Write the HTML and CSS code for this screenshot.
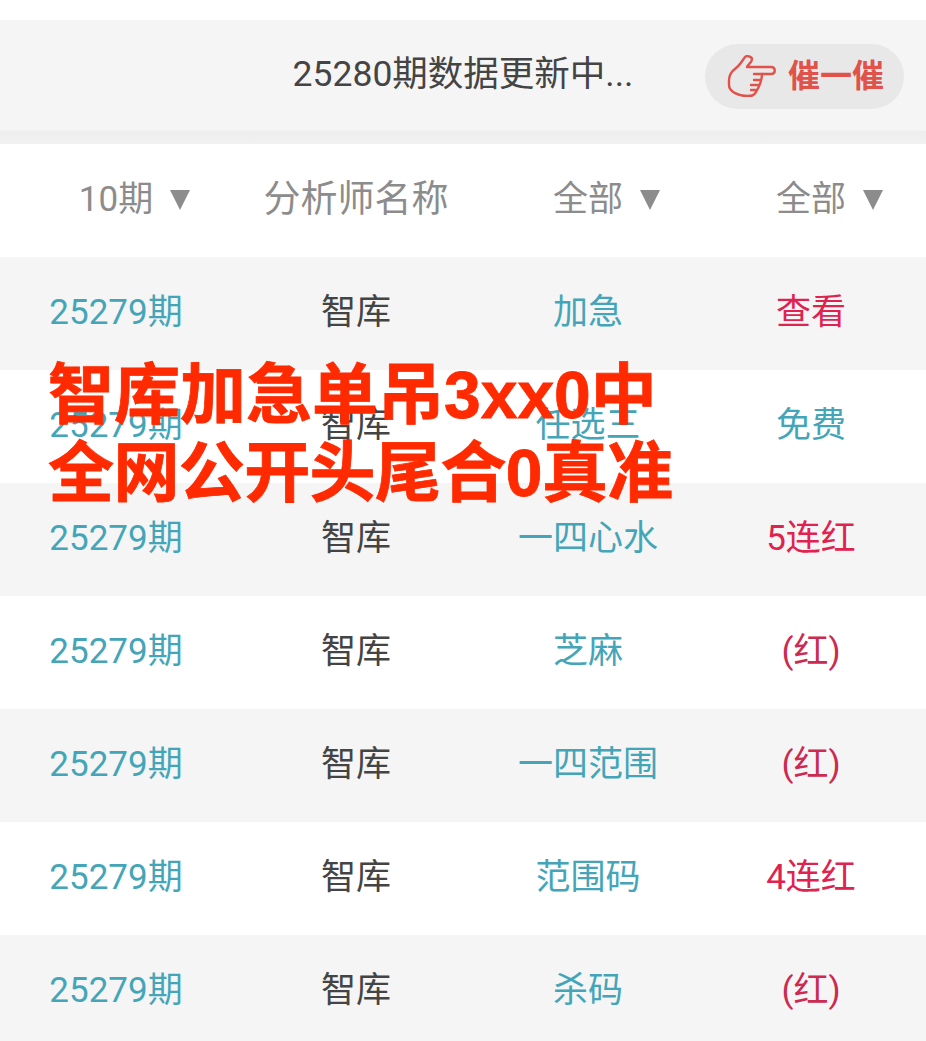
FILE: index.html
```html
<!DOCTYPE html>
<html lang="zh-CN">
<head>
    <meta charset="UTF-8">
    <meta name="viewport" content="width=device-width, initial-scale=1.0">
    <title>智库</title>
    <link rel="stylesheet" href="styles.css">
</head>
<body>
    <div class="page">
        <div class="notice">
            <p class="notice-text">25280期数据更新中...</p>
            <button type="button" class="urge">
                <svg class="urge-icon" viewBox="0 0 50 42" fill="none" stroke="#e0524a" stroke-width="2.4" stroke-linecap="round" stroke-linejoin="round">
                    <path d="M2 25C2 19 5 16 9 13C13 10 15 6 18 2C20 0 25 2 25 4C25 8 21 9 20 12H44C49 12 49 19 44 19H35C35 25 32 32 29 37C27 41 24 41 20 41C12 41 2 37 2 30Z"/>
                    <path d="M35 19H27M33 25H27M31 30H24M29 35H24"/>
                </svg>
                <span>催一催</span>
            </button>
        </div>

        <div class="table-head">
            <div class="head-cell">10期<i class="arrow"></i></div>
            <div class="head-cell name-cell">分析师名称</div>
            <div class="head-cell">全部<i class="arrow"></i></div>
            <div class="head-cell">全部<i class="arrow"></i></div>
        </div>

        <div class="row">
            <div class="issue">25279期</div><div class="name">智库</div><div class="kind">加急</div><div class="crimson">查看</div>
        </div>
        <div class="row">
            <div class="issue">25279期</div><div class="name">智库</div><div class="kind">任选三</div><div class="kind">免费</div>
        </div>
        <div class="row">
            <div class="issue">25279期</div><div class="name">智库</div><div class="kind">一四心水</div><div class="crimson">5连红</div>
        </div>
        <div class="row">
            <div class="issue">25279期</div><div class="name">智库</div><div class="kind">芝麻</div><div class="wine">(红)</div>
        </div>
        <div class="row">
            <div class="issue">25279期</div><div class="name">智库</div><div class="kind">一四范围</div><div class="wine">(红)</div>
        </div>
        <div class="row">
            <div class="issue">25279期</div><div class="name">智库</div><div class="kind">范围码</div><div class="crimson">4连红</div>
        </div>
        <div class="row">
            <div class="issue">25279期</div><div class="name">智库</div><div class="kind">杀码</div><div class="wine">(红)</div>
        </div>

        <div class="banner">
            <div>智库加急单吊3xx0中</div>
            <div class="banner-tight">全网公开头尾合0真准</div>
        </div>
    </div>
</body>
</html>
```

FILE: styles.css
```css
html, body {
    margin: 0;
    height: 100%;
    overflow: hidden;
}

body {
    font-family: Roboto, "Noto Sans CJK SC", sans-serif;
    background-color: #ffffff;
}

.page {
    position: relative;
    height: 1041px;
    overflow: hidden;
    padding-top: 20px;
    box-sizing: border-box;
}

/* Top notice bar */
.notice {
    display: grid;
    grid-template-columns: 1fr auto 1fr;
    align-items: center;
    height: 124px;
    padding: 0 22px 14px 0;
    box-sizing: border-box;
    background: linear-gradient(#f5f5f5 110px, #eeeeee 111px, #f1f1f1 124px);
}

.notice-text {
    grid-column: 2;
    margin: 0 0 9px 22px;
    font-size: 35.5px;
    color: #444444;
    white-space: nowrap;
}

.urge {
    grid-column: 3;
    justify-self: end;
    display: flex;
    align-items: center;
    gap: 11px;
    height: 65px;
    margin-top: 2px;
    padding: 0 20px 6px 22px;
    border: 0;
    border-radius: 33px;
    background-color: #e8e8e8;
    color: #e0524a;
    font-family: inherit;
    font-size: 32px;
    font-weight: 700;
}

.urge-icon {
    width: 50px;
    height: 42px;
    margin-top: 5px;
}

/* Table */
.table-head, .row {
    display: grid;
    grid-template-columns: 232px 248px 216px 230px;
    align-items: center;
    justify-items: center;
    height: 113px;
    padding-bottom: 10px;
    box-sizing: border-box;
    font-size: 35px;
}

.table-head {
    color: #8c8c8c;
}

.head-cell {
    display: flex;
    align-items: center;
}

.name-cell {
    font-size: 37px;
}

.arrow {
    width: 0;
    height: 0;
    margin-top: 8px;
    margin-left: 17px;
    margin-right: -37px;
    border-left: 10px solid transparent;
    border-right: 10px solid transparent;
    border-top: 20px solid #8c8c8c;
}

.row:nth-of-type(odd) {
    background-color: #f5f5f5;
}

.issue, .kind {
    color: #45a5b8;
}

.name {
    color: #444444;
}

.crimson {
    color: #e0224f;
}

.wine {
    color: #cc2a50;
}

/* Red caption pasted over the table */
.banner {
    position: absolute;
    left: 48px;
    top: 356px;
    font-family: "Liberation Sans", "Noto Sans CJK SC", sans-serif;
    font-size: 66px;
    font-weight: 700;
    line-height: 78px;
    color: #ff2a00;
    -webkit-text-stroke: 0.8px #ff2a00;
    white-space: nowrap;
}

.banner-tight {
    letter-spacing: -0.6px;
}
```
